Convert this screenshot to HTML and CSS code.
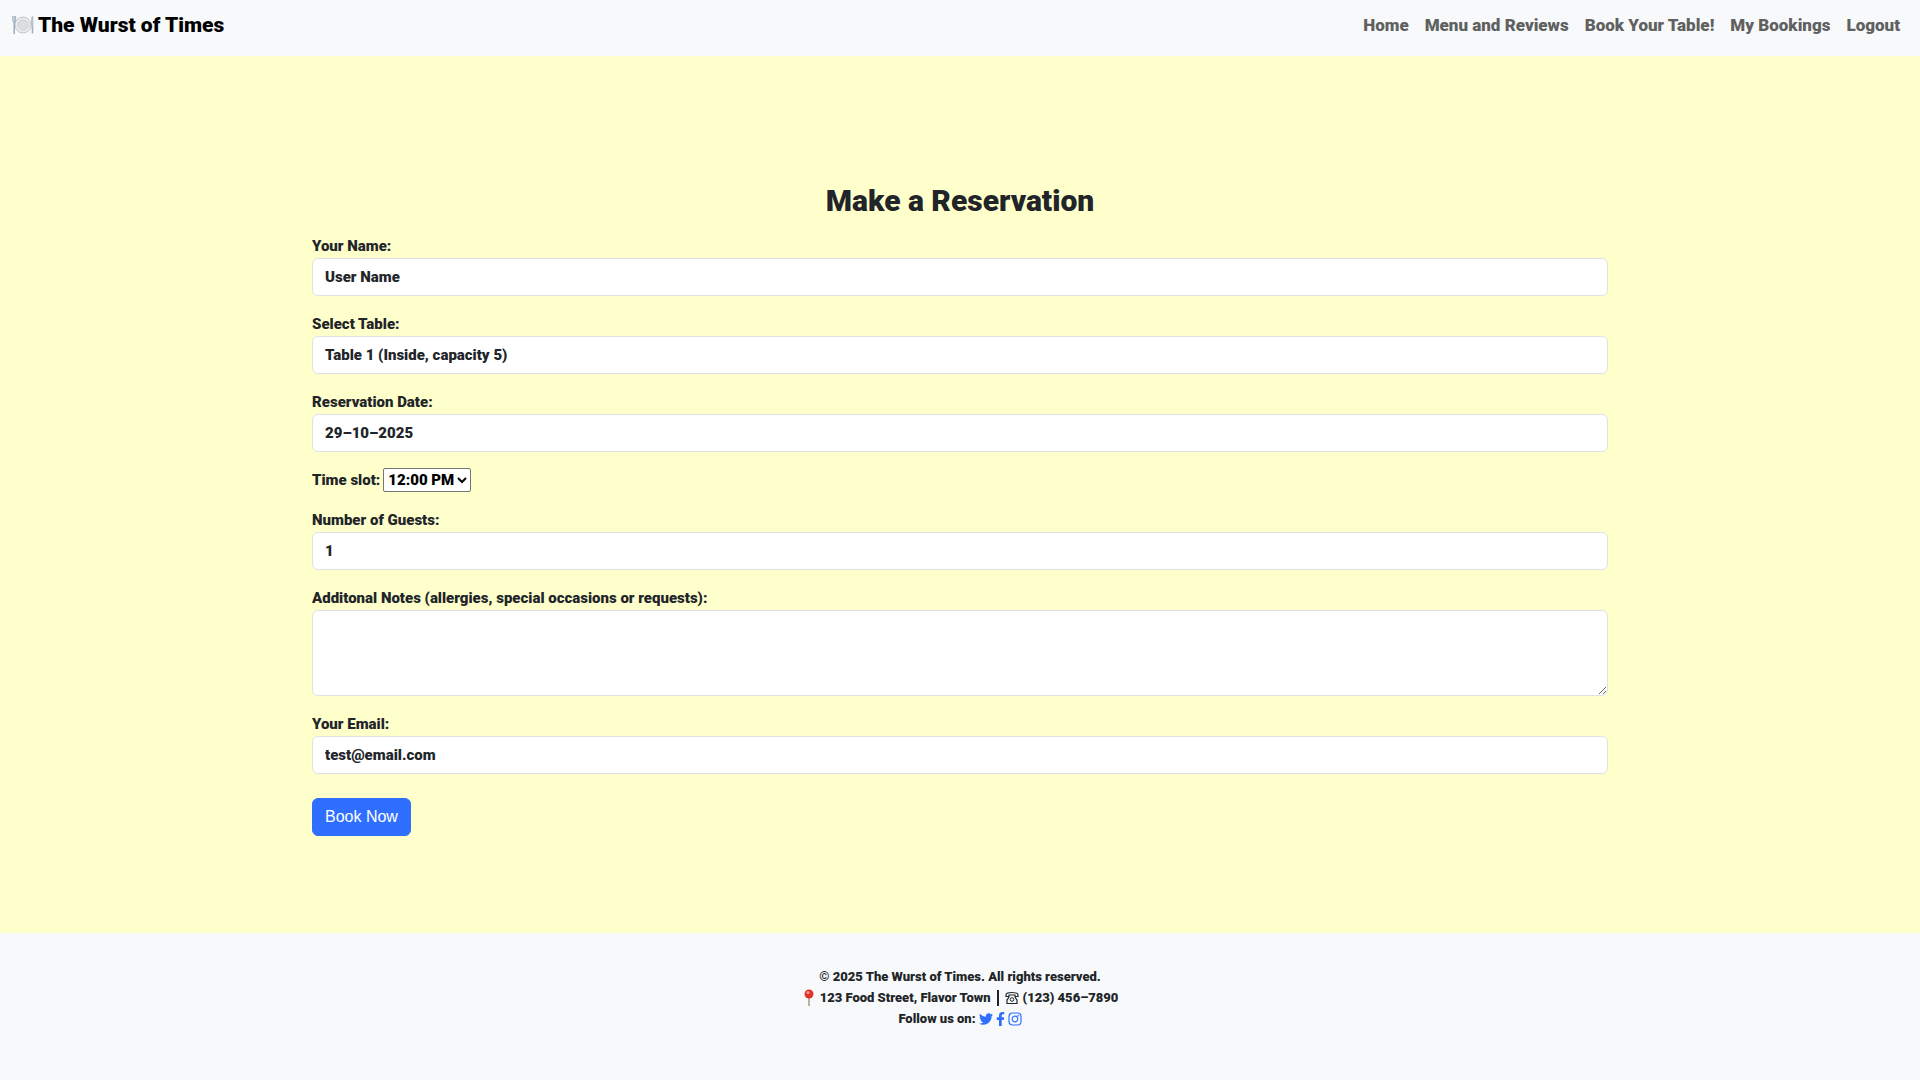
FILE: index.html
```html
<!DOCTYPE html>
<html lang="en">
<head>
<meta charset="utf-8">
<meta name="viewport" content="width=device-width, initial-scale=1">
<title>The Wurst of Times</title>
<link rel="stylesheet" href="styles.css">
</head>
<body>
<header class="navbar">
  <a class="brand" href="#">
    <svg class="brand-icon" viewBox="0 0 22 20" aria-hidden="true">
      <circle cx="11" cy="10" r="8" fill="#e9eaec" stroke="#c3c6ca"/>
      <circle cx="11" cy="10" r="5" fill="#dcdee0" stroke="#cccfd2"/>
      <path d="M.8 1v4.500q0 1.500 1.400 1.500t1.400-1.500V1M2.200 1v6" fill="none" stroke="#8799ae" stroke-width=".8"/>
      <path d="M2.200 7v12M20.500 1.500v17" fill="none" stroke="#a1b1c3" stroke-width="1.600"/>
      <path d="M20.900 1q-1.900 1-1.900 5v5h1.900z" fill="#b9c5d1"/>
    </svg>
    <span>The Wurst of Times</span>
  </a>
  <nav class="nav-links">
    <a href="#">Home</a>
    <a href="#">Menu and Reviews</a>
    <a href="#">Book Your Table!</a>
    <a href="#">My Bookings</a>
    <a href="#">Logout</a>
  </nav>
</header>

<main class="container">
  <h1>Make a Reservation</h1>
  <form>
    <div class="field">
      <label for="name">Your Name:</label>
      <input class="control" id="name" type="text" value="User Name">
    </div>
    <div class="field">
      <label for="table">Select Table:</label>
      <select class="control" id="table"><option>Table 1 (Inside, capacity 5)</option></select>
    </div>
    <div class="field">
      <label for="date">Reservation Date:</label>
      <input class="control" id="date" type="text" value="29–10–2025">
    </div>
    <div class="field field-inline">
      <label for="slot">Time slot:</label>
      <select class="slot" id="slot"><option>12:00 PM</option></select>
    </div>
    <div class="field">
      <label for="guests">Number of Guests:</label>
      <input class="control" id="guests" type="number" value="1">
    </div>
    <div class="field">
      <label for="notes">Additonal Notes (allergies, special occasions or requests):</label>
      <textarea class="control" id="notes" rows="3"></textarea>
    </div>
    <div class="field">
      <label for="email">Your Email:</label>
      <input class="control" id="email" type="email" value="test@email.com">
    </div>
    <button class="submit" type="submit">Book Now</button>
  </form>
</main>

<footer class="footer">
  <p>© 2025 The Wurst of Times. All rights reserved.</p>
  <p>
    <svg class="pin" viewBox="0 0 14 18" aria-hidden="true">
      <path d="M7 8v9" stroke="#a4937f" stroke-width="1.400"/>
      <circle cx="7" cy="5" r="4.500" fill="#df342b"/>
      <circle cx="6" cy="3.500" r="1.500" fill="#f49b91"/>
    </svg>
    <span>123 Food Street, Flavor Town</span>
    <span class="divider"></span>
    <svg class="phone" viewBox="0 0 14 14" aria-hidden="true">
      <path d="M1 5.500V4q0-2.500 6-2.500T13 4v1.500h-3V4H4v1.500zM4 5q0 2-2 4v3.500h10V9q-2-2-2-4" fill="none" stroke="currentColor" stroke-width="1.200"/>
      <circle cx="7" cy="8.500" r="1.800" fill="none" stroke="currentColor"/>
    </svg>
    <span>(123) 456–7890</span>
  </p>
  <p class="follow">
    <span>Follow us on:</span>
    <a href="#" aria-label="Twitter"><svg class="social" viewBox="0 0 512 512"><path d="M459.370 151.716c.325 4.548.325 9.097.325 13.645 0 138.720-105.583 298.558-298.558 298.558-59.452 0-114.680-17.219-161.137-47.106 8.447.974 16.568 1.299 25.340 1.299 49.055 0 94.213-16.568 130.274-44.832-46.132-.975-84.792-31.188-98.112-72.772 6.498.974 12.995 1.624 19.818 1.624 9.421 0 18.843-1.300 27.614-3.573-48.081-9.747-84.143-51.980-84.143-102.985v-1.299c13.969 7.797 30.214 12.670 47.431 13.319-28.264-18.843-46.781-51.005-46.781-87.391 0-19.492 5.197-37.360 14.294-52.954 51.655 63.675 129.300 105.258 216.365 109.807-1.624-7.797-2.599-15.918-2.599-24.040 0-57.828 46.782-104.934 104.934-104.934 30.213 0 57.502 12.670 76.670 33.137 23.715-4.548 46.456-13.320 66.599-25.340-7.798 24.366-24.366 44.833-46.132 57.827 21.117-2.273 41.584-8.122 60.426-16.243-14.292 20.791-32.161 39.308-52.628 54.253z"/></svg></a>
    <a href="#" aria-label="Facebook"><svg class="social social-f" viewBox="0 0 320 512"><path d="M279.140 288l14.220-92.660h-88.910v-60.130c0-25.350 12.420-50.060 52.240-50.060h40.420V6.260S260.430 0 225.360 0c-73.220 0-121.080 44.380-121.080 124.720v70.620H22.890V288h81.390v224h100.170V288z"/></svg></a>
    <a href="#" aria-label="Instagram"><svg class="social social-ig" viewBox="0 0 14 14"><rect x="1" y="1" width="12" height="12" rx="3.500"/><circle cx="7" cy="7" r="2.800"/><circle cx="10.400" cy="3.600" r=".3"/></svg></a>
  </p>
</footer>
</body>
</html>
```
FILE: styles.css
```css
*, *::before, *::after { box-sizing: border-box; }

body {
  margin: 0;
  min-height: 100vh;
  display: flex;
  flex-direction: column;
  background: #ffffcc;
  color: #212529;
  font: 900 15px/24px Roboto, sans-serif;
}

.navbar {
  display: flex;
  align-items: center;
  justify-content: space-between;
  min-height: 56px;
  padding: 0 20px 6px 12px;
  background: #f8f9fa;
}

.brand {
  display: flex;
  align-items: center;
  gap: 4px;
  color: #000;
  font-size: 21px;
  text-decoration: none;
}

.brand-icon { width: 22px; height: 20px; }

.nav-links { display: flex; gap: 16px; font-size: 17px; }
.nav-links a { color: #5f6161; text-decoration: none; }

.container {
  width: 100%;
  max-width: 1320px;
  margin: 0 auto;
  padding: 125px 12px 97px;
}

h1 {
  margin: 0 0 14px;
  font-size: 30px;
  line-height: 39px;
  font-weight: 900;
  text-align: center;
}

.field { display: flex; flex-direction: column; margin-bottom: 16px; }
.field-inline { flex-direction: row; align-items: center; gap: 3px; }

.control {
  width: 100%;
  height: 38px;
  padding: 6px 12px;
  border: 1px solid #dee2e6;
  border-radius: 6px;
  background: #fff;
  color: #212529;
  font: inherit;
  appearance: none;
}
textarea.control { height: 86px; resize: vertical; }
input[type="number"] { appearance: textfield; }

.slot {
  height: 24px;
  padding: 0;
  border: 1px solid #767676;
  border-radius: 2px;
  background: #fff;
  color: #000;
  font: inherit;
}

.submit {
  height: 38px;
  margin-top: 8px;
  padding: 6px 12px;
  border: 1px solid #2f6fff;
  border-radius: 6px;
  background: #2f6fff;
  color: #fff;
  font: 400 16px/24px "Liberation Sans", Arial, sans-serif;
}

.footer {
  flex: 1;
  padding: 33px 12px 50px;
  background: #f8f9fa;
  font-size: 13px;
  line-height: 21px;
}
.footer p {
  display: flex;
  align-items: center;
  justify-content: center;
  gap: 4px;
  margin: 0;
}
.footer .follow { gap: 3px; }
.footer a { display: flex; }

.pin { width: 14px; height: 18px; }
.phone { width: 14px; height: 14px; }
.divider { width: 2px; height: 16px; margin: 0 2px; background: #212529; }

.social { width: 14px; height: 14px; fill: #2f6fff; }
.social-f { width: 9px; }
.social-ig { fill: none; stroke: #2f6fff; stroke-width: 1.200; }
```
